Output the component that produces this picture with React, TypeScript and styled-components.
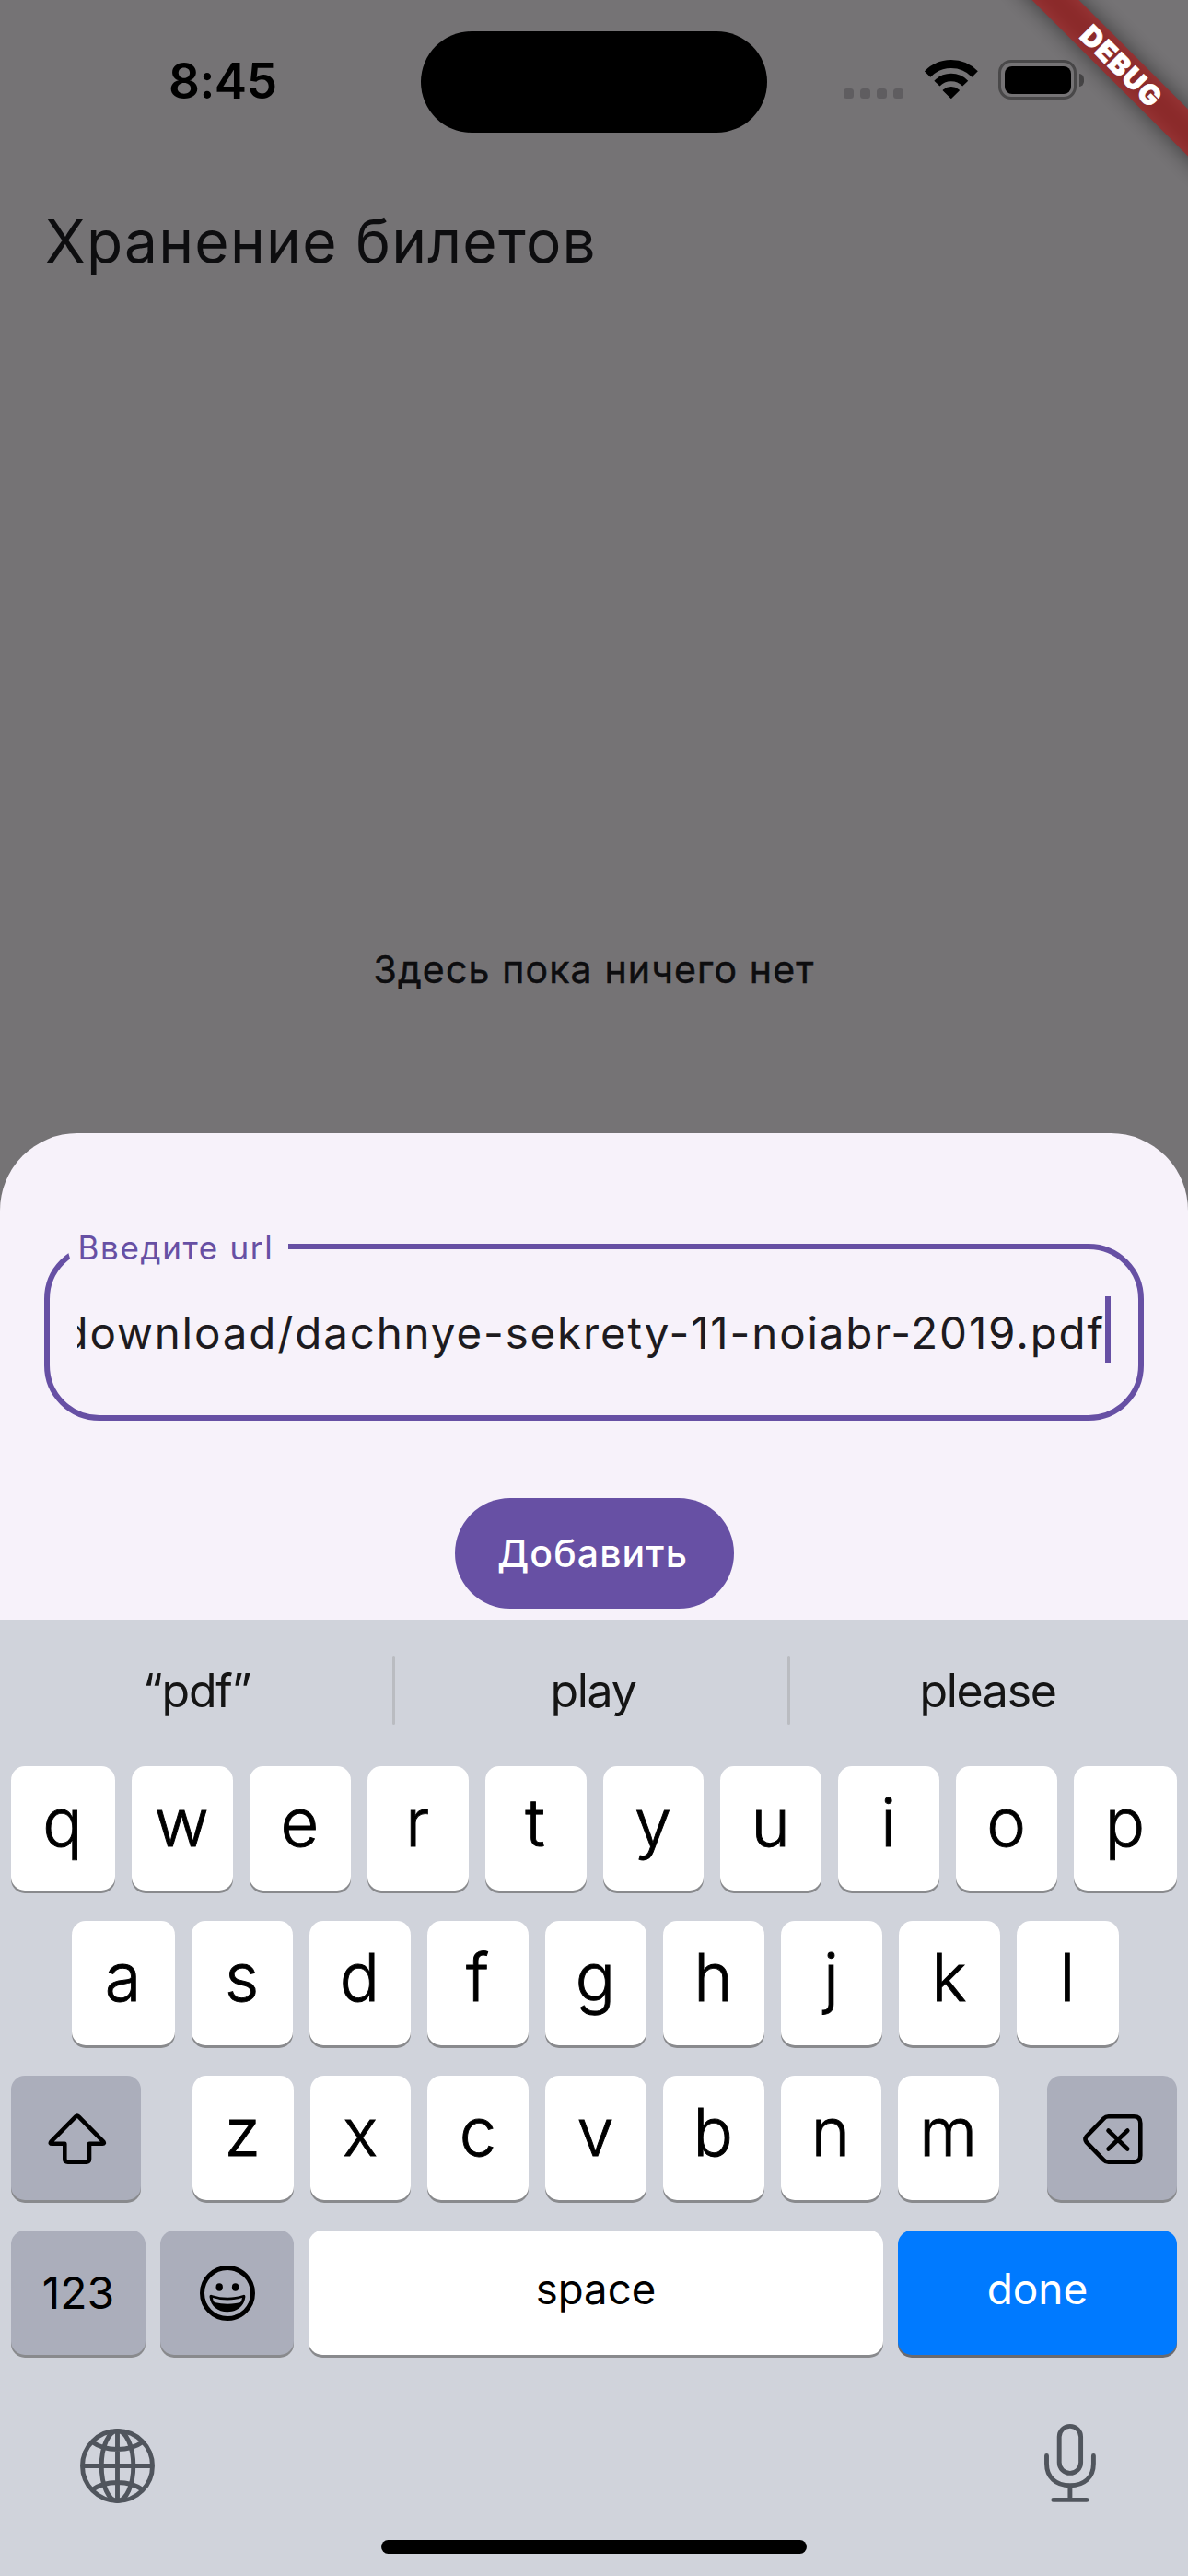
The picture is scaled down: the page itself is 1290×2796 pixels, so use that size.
import React from "react";
import styled, { createGlobalStyle } from "styled-components";

const GlobalStyle = createGlobalStyle`
  *, *::before, *::after { box-sizing: border-box; }
  body { margin: 0; }
`;

const Screen = styled.div`
  position: relative;
  display: flex;
  flex-direction: column;
  width: 1290px;
  height: 2796px;
  overflow: hidden;
  background: #757375;
  color: #0d0d0f;
  font-family: Inter, "Liberation Sans", sans-serif;
`;

const StatusBar = styled.header`
  display: grid;
  grid-template-columns: 457px 376px 1fr;
  height: 178px;
  padding-top: 34px;
`;

const Time = styled.div`
  padding: 24px 0 0 183px;
  color: #000;
  font-size: 53px;
  font-weight: 600;
  line-height: 60px;
  letter-spacing: -0.5px;
`;

const Island = styled.div`
  height: 110px;
  border-radius: 55px;
  background: #000;
`;

const StatusIcons = styled.div`
  display: flex;
  align-items: flex-start;
  padding: 31px 0 0 83px;
`;

const SignalDots = styled.div`
  display: flex;
  gap: 7px;
  width: 88px;
  padding-top: 31px;
`;

const Dot = styled.span`
  width: 11px;
  height: 11px;
  border-radius: 3.5px;
  background: #5f5d60;
`;

const Battery = styled.div`
  display: flex;
  align-items: center;
  gap: 3px;
  margin-left: 22px;
`;

const BatteryShell = styled.div`
  width: 85px;
  height: 43px;
  padding: 3.5px;
  border: 3.5px solid #494849;
  border-radius: 14px;
`;

const BatteryLevel = styled.div`
  height: 100%;
  border-radius: 8px;
  background: #000;
`;

const BatteryCap = styled.div`
  width: 5px;
  height: 14px;
  border-radius: 0 6px 6px 0 / 0 7px 7px 0;
  background: #454445;
`;

const DebugBanner = styled.div`
  position: absolute;
  top: 54px;
  left: 1068px;
  display: flex;
  align-items: center;
  justify-content: center;
  width: 300px;
  height: 36px;
  transform: rotate(45deg);
  color: #fff;
  font-size: 30px;
  font-weight: 900;
  line-height: 36px;
  letter-spacing: 1.3px;
  -webkit-text-stroke: 0.8px #fff;

  &::before {
    content: "";
    position: absolute;
    inset: 0;
    background: rgba(0, 0, 0, 0.5);
    filter: blur(12px);
  }

  &::after {
    content: "";
    position: absolute;
    inset: 0;
    background: rgba(183, 28, 28, 0.627);
  }
`;

const DebugText = styled.span`
  position: relative;
  z-index: 1;
`;

const Page = styled.main`
  display: flex;
  flex-direction: column;
  height: 1052px;
`;

const Title = styled.h1`
  margin: 44px 0 0 49px;
  font-size: 64px;
  font-weight: 400;
  line-height: 80px;
  letter-spacing: 1.27px;
  white-space: nowrap;
`;

const EmptyNote = styled.p`
  margin: 720px 0 0;
  font-size: 41px;
  font-weight: 400;
  line-height: 60px;
  letter-spacing: 1.15px;
  -webkit-text-stroke: 0.5px currentColor;
  text-align: center;
`;

const Sheet = styled.section`
  display: flex;
  flex-direction: column;
  align-items: center;
  height: 528px;
  padding: 120px 48px 0;
  border-radius: 84px 84px 0 0;
  background: #f7f2fa;
`;

const Field = styled.label`
  position: relative;
  display: flex;
  width: 1194px;
  height: 192px;
  padding: 51px 30px 0 30px;
  border: 6px solid #6750a4;
  border-radius: 60px;
`;

const FieldLabel = styled.span`
  position: absolute;
  top: -23px;
  left: 20px;
  width: 239px;
  height: 42px;
  padding-left: 10.5px;
  background: #f7f2fa;
  clip-path: polygon(0 0, 100% 0, 100% 100%, 4.5px 100%, 0 26px);
  color: #6750a4;
  font-size: 35px;
  line-height: 42px;
  letter-spacing: 1.65px;
  white-space: nowrap;
`;

const FieldValue = styled.span`
  display: flex;
  justify-content: flex-end;
  width: 1116px;
  height: 72px;
  margin-top: 4px;
  overflow: hidden;
  color: #1d1b20;
  font-size: 47.5px;
  line-height: 72px;
  letter-spacing: 1.85px;
  white-space: nowrap;
`;

const Caret = styled.span`
  flex: none;
  width: 6px;
  height: 72px;
  background: #6750a4;
`;

const AddButton = styled.button`
  width: 303px;
  height: 120px;
  margin-top: 84px;
  padding: 0 3px 0 0;
  border: 0;
  border-radius: 60px;
  background: #6750a4;
  color: #fff;
  font-family: inherit;
  font-size: 41px;
  font-weight: 500;
  letter-spacing: 1.1px;
`;

const Keyboard = styled.section`
  display: flex;
  flex-direction: column;
  flex: 1;
  background: #d0d3db;
  color: #000;
`;

const Suggestions = styled.div`
  display: grid;
  grid-template-columns: 426px 3px 426px 3px 1fr;
  align-items: center;
  height: 159px;
  color: #151515;
  font-size: 50px;
  letter-spacing: -1.3px;
  text-align: center;
`;

const Suggestion = styled.span<{ $shift: number }>`
  padding-bottom: 5px;
  text-indent: ${(p) => p.$shift}px;
`;

const Divider = styled.i`
  height: 75px;
  margin-bottom: 6px;
  border-radius: 2px;
  background: #babcc1;
`;

const Rows = styled.div`
  display: flex;
  flex-direction: column;
  gap: 33px;
`;

const Row = styled.div<{ $left?: number; $right?: number; $gap?: number }>`
  display: flex;
  gap: ${(p) => p.$gap ?? 18}px;
  height: 135px;
  padding-left: ${(p) => p.$left ?? 12}px;
  padding-right: ${(p) => p.$right ?? 12}px;
`;

const tones = {
  light: { bg: "#fff", fg: "#000", edge: "#898a8d" },
  dark: { bg: "#abaebb", fg: "#000", edge: "#898a8d" },
  blue: { bg: "#007aff", fg: "#fff", edge: "#6a6a6e" },
};

const Key = styled.button<{ $w?: number; $tone?: keyof typeof tones; $size?: number; $lift?: number }>`
  display: flex;
  flex: ${(p) => (p.$w ? `0 0 ${p.$w}px` : "1 1 0")};
  align-items: center;
  justify-content: center;
  height: 135px;
  padding: 0 ${(p) => (p.$size ? 0 : 1)}px ${(p) => p.$lift ?? 14}px 0;
  border: 0;
  border-radius: 15px;
  background: ${(p) => tones[p.$tone ?? "light"].bg};
  box-shadow: 0 3px 0 ${(p) => tones[p.$tone ?? "light"].edge};
  color: ${(p) => tones[p.$tone ?? "light"].fg};
  font-family: inherit;
  font-size: ${(p) => p.$size ?? 72}px;
  font-weight: ${(p) => (p.$size ? 400 : 300)};
  -webkit-text-stroke: ${(p) => (p.$size ? 0 : 0.9)}px currentColor;
`;

const IconKey = styled(Key)`
  padding: 2px 0 0 2px;
`;

const Letters = styled.div`
  display: flex;
  gap: 18px;
  width: 876px;
  margin: 0 52px 0 56px;
`;

const Footer = styled.div`
  display: flex;
  justify-content: space-between;
  padding: 74px 100px 0 87px;
`;

const FooterIcon = styled.span<{ $top: number }>`
  display: block;
  height: 86px;
  padding-top: ${(p) => p.$top}px;

  svg { display: block; overflow: visible; }
`;

const HomeBar = styled.div`
  width: 462px;
  height: 15px;
  margin: 41px auto 0;
  border-radius: 8px;
  background: #000;
`;

const WifiIcon = () => (
  <svg width="58" height="42" viewBox="0 0 58 42" fill="none" stroke="#000">
    <path d="M3 15.5A36 36 0 0 1 54.6 15.5" strokeWidth="9" />
    <path d="M13.4 25.6A21.4 21.4 0 0 1 44.2 25.6" strokeWidth="8.4" />
    <path d="M28.8 41.2L20.4 33Q28.8 26.5 37.2 33Z" fill="#000" strokeWidth="1.4" strokeLinejoin="round" />
  </svg>
);

const ShiftIcon = () => (
  <svg width="64" height="55" viewBox="0 0 64 55" fill="none" stroke="#000" strokeWidth="4.6" strokeLinejoin="round">
    <path d="M30.2 3.3Q31.8 1.6 33.4 3.3L60.3 30.6Q61.8 32.8 59.4 32.8H45V49.3Q45 52.7 41.6 52.7H21.7Q18.3 52.7 18.3 49.3V32.8H4.4Q1.8 32.8 3.4 30.6Z" />
  </svg>
);

const BackspaceIcon = () => (
  <svg width="65" height="54" viewBox="0 0 65 54" fill="none" stroke="#000" strokeWidth="4.6" strokeLinecap="round">
    <path d="M27.6 2.3H55.2Q62.3 2.3 62.3 9.4V44.6Q62.3 51.7 55.2 51.7H27.6Q24.6 51.7 22.6 49.6L3.8 30.2Q1.2 27 3.8 23.8L22.6 4.4Q24.6 2.3 27.6 2.3Z" />
    <path d="M27.5 17.5L48.3 37.5M48.3 17.5L27.5 37.5" />
  </svg>
);

const EmojiIcon = () => (
  <svg width="60" height="60" viewBox="0 0 60 60">
    <circle cx="30" cy="30" r="27.5" fill="none" stroke="#000" strokeWidth="5" />
    <ellipse cx="21.2" cy="23.5" rx="3.7" ry="4.2" />
    <ellipse cx="38.6" cy="23.5" rx="3.7" ry="4.2" />
    <path d="M10.5 34Q10.4 31 13.6 32.2Q30 37.2 46.4 32.2Q49.6 31 49.4 34C48 44.5 40.5 50.2 30 50.2S12 44.5 10.5 34Z" />
    <path d="M13.9 35Q30 40 46 35Q45.6 38 44 40Q30 43.5 16 40Q14.2 38 13.9 35Z" fill="#abaebb" />
  </svg>
);

const GlobeIcon = () => (
  <svg width="81" height="81" viewBox="0 0 81 81" fill="none" stroke="#50555d" strokeWidth="4.9">
    <circle cx="40.5" cy="40.5" r="38" />
    <ellipse cx="40.5" cy="40.5" rx="17.3" ry="38" />
    <path d="M40.5 2V79M2 40.5H79M13 14.5Q24 22.5 40.5 22.5T68 14.5M13 66.5Q24 58.5 40.5 58.5T68 66.5" />
  </svg>
);

const MicIcon = () => (
  <svg width="56" height="85" viewBox="0 0 56 85" fill="none" stroke="#50555d" strokeWidth="4.9" strokeLinecap="round">
    <rect x="16.2" y="2.4" width="23.4" height="51" rx="11.7" />
    <path d="M2.5 34.5V43C2.5 58 12.5 66.8 27.9 66.8S53.4 58 53.4 43V34.5M27.9 67V82M9.8 82.4H46" />
  </svg>
);

export default function App() {
  return (
    <>
      <GlobalStyle />
      <Screen>
        <StatusBar>
          <Time>8:45</Time>
          <Island />
          <StatusIcons>
            <SignalDots>
              <Dot /><Dot /><Dot /><Dot />
            </SignalDots>
            <WifiIcon />
            <Battery>
              <BatteryShell><BatteryLevel /></BatteryShell>
              <BatteryCap />
            </Battery>
          </StatusIcons>
        </StatusBar>
        <Page>
          <Title>Хранение билетов</Title>
          <EmptyNote>Здесь пока ничего нет</EmptyNote>
        </Page>
        <Sheet>
          <Field>
            <FieldLabel>Введите url</FieldLabel>
            <FieldValue>download/dachnye-sekrety-11-noiabr-2019.pdf</FieldValue>
            <Caret />
          </Field>
          <AddButton>Добавить</AddButton>
        </Sheet>
        <Keyboard>
          <Suggestions>
            <Suggestion $shift={1}>“pdf”</Suggestion>
            <Divider />
            <Suggestion $shift={4}>play</Suggestion>
            <Divider />
            <Suggestion $shift={-3}>please</Suggestion>
          </Suggestions>
          <Rows>
            <Row>
              {[..."qwertyuiop"].map((c) => (
                <Key key={c} $w={c === "q" ? 113 : c === "p" ? 112 : undefined}>{c}</Key>
              ))}
            </Row>
            <Row $left={78} $right={75}>
              {[..."asdfghjkl"].map((c) => (
                <Key key={c} $w={c === "a" ? 112 : c === "l" ? 111 : undefined}>{c}</Key>
              ))}
            </Row>
            <Row $gap={0}>
              <IconKey $w={141} $tone="dark"><ShiftIcon /></IconKey>
              <Letters>
                {[..."zxcvbnm"].map((c) => <Key key={c}>{c}</Key>)}
              </Letters>
              <IconKey $w={141} $tone="dark"><BackspaceIcon /></IconKey>
            </Row>
            <Row $gap={16}>
              <Key $w={146} $tone="dark" $size={48} $lift={0}>123</Key>
              <Key $w={145} $tone="dark" $size={47} $lift={0}><EmojiIcon /></Key>
              <Key $size={45.5} $lift={9}>space</Key>
              <Key $w={303} $tone="blue" $size={46} $lift={9}>done</Key>
            </Row>
          </Rows>
          <Footer>
            <FooterIcon $top={6}><GlobeIcon /></FooterIcon>
            <FooterIcon $top={1}><MicIcon /></FooterIcon>
          </Footer>
          <HomeBar />
        </Keyboard>
        <DebugBanner><DebugText>DEBUG</DebugText></DebugBanner>
      </Screen>
    </>
  );
}
